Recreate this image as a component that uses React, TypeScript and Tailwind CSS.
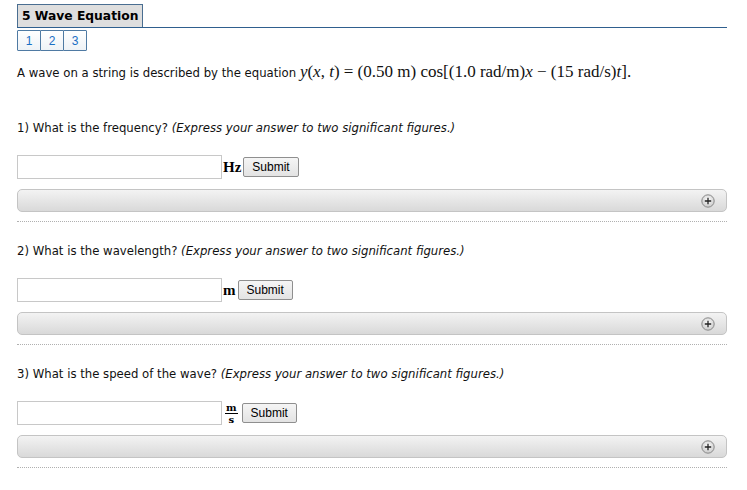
import React from "react";

const sans = { fontFamily: "Tahoma, 'DejaVu Sans', sans-serif" };

const PlusIcon = () => (
    <svg width="14" height="14" viewBox="0 0 14 14">
        <defs>
            <radialGradient id="pg" cx="50%" cy="40%" r="60%">
                <stop offset="0%" stopColor="#ffffff"/>
                <stop offset="100%" stopColor="#c8c8c8"/>
            </radialGradient>
        </defs>
        <circle cx="7" cy="7" r="6.2" fill="url(#pg)" stroke="#8a8a8a" strokeWidth="1"/>
        <path d="M7 3.8v6.4M3.8 7h6.4" stroke="#222" strokeWidth="1.3"/>
    </svg>
);

const Unit = ({unit}: {unit: string}) => {
    if (unit === "m/s") {
        return (
            <span className="inline-flex flex-col items-center mx-[3px] text-[10px] leading-[9px] font-bold"
                  style={{fontFamily: "'DejaVu Serif', 'Liberation Serif', serif"}}>
                <span className="border-b border-black px-[1px] pb-[1px]">m</span>
                <span className="pt-[1px]">s</span>
            </span>
        );
    }
    return (
        <span className="mx-[1px] text-[15px] font-bold" style={{fontFamily: "'Liberation Serif', serif"}}>
            {unit}
        </span>
    );
};

interface QuestionProps {
    num: number,
    text: string,
    unit: string,
    first?: boolean
}

const Question = ({num, text, unit, first}: QuestionProps) => {
    return (
        <div className={first ? "pt-[39px]" : "pt-[22px]"}>
            <p className="text-[11.7px] leading-[15px] text-[#111]" style={sans}>
                {num}) {text} <i>(Express your answer to two significant figures.)</i>
            </p>
            <div className="flex items-center mt-[19px] h-[24px]">
                <input className="w-[205px] h-[24px] border border-[#c8c8c8] bg-white outline-none"/>
                <Unit unit={unit}/>
                <button
                    className="ml-[1px] h-[20px] px-[8px] text-[12px] border border-[#8f8f8f] rounded-[2px] bg-gradient-to-b from-[#f5f5f5] to-[#e3e3e3] text-black"
                    style={{fontFamily: "'Liberation Sans', Arial, sans-serif"}}>
                    Submit
                </button>
            </div>
            <div
                className="mt-[10px] h-[23px] flex items-center justify-end pr-[11px] rounded-[5px] border border-[#c4c4c4] bg-gradient-to-b from-[#f3f3f3] to-[#d9d9d9]">
                <PlusIcon/>
            </div>
            <div className="mt-[9px] border-b border-dotted border-[#b0b0b0]"/>
        </div>
    );
};

export default function App() {
    return (
        <div className="bg-white w-[747px] h-[490px] pl-[17px] pr-[20px] pt-[4px] text-black">
            <div className="border-b border-[#2f5f8e] flex">
                <span className="inline-block bg-[#dedede] border border-[#4a6e91] border-b-0 px-[4px] h-[23px] leading-[22px] text-[12.3px] font-bold"
                      style={sans}>
                    5 Wave Equation
                </span>
            </div>
            <div className="flex mt-[2px]">
                {[1, 2, 3].map(n => (
                    <span key={n}
                          className="w-[24px] h-[21px] -ml-px first:ml-0 flex items-center justify-center border border-[#4f7aa3] rounded-[1px] text-[12px] text-[#1a6fc4] bg-gradient-to-b from-white to-[#eef2f6]"
                          style={{fontFamily: "'Liberation Sans', Arial, sans-serif"}}>
                        {n}
                    </span>
                ))}
            </div>
            <p className="mt-[12px] text-[11.7px] leading-[18px] text-[#111] flex items-baseline" style={sans}>
                <span>A wave on a string is described by the equation&nbsp;</span>
                <span className="text-[17px] whitespace-nowrap" style={{fontFamily: "'Liberation Serif', serif"}}>
                    <i>y</i>(<i>x</i>, <i>t</i>) = (0.50 m) cos[(1.0 rad/m)<i>x</i> − (15 rad/s)<i>t</i>].
                </span>
            </p>
            <Question num={1} text="What is the frequency?" unit="Hz" first/>
            <Question num={2} text="What is the wavelength?" unit="m"/>
            <Question num={3} text="What is the speed of the wave?" unit="m/s"/>
        </div>
    );
}
